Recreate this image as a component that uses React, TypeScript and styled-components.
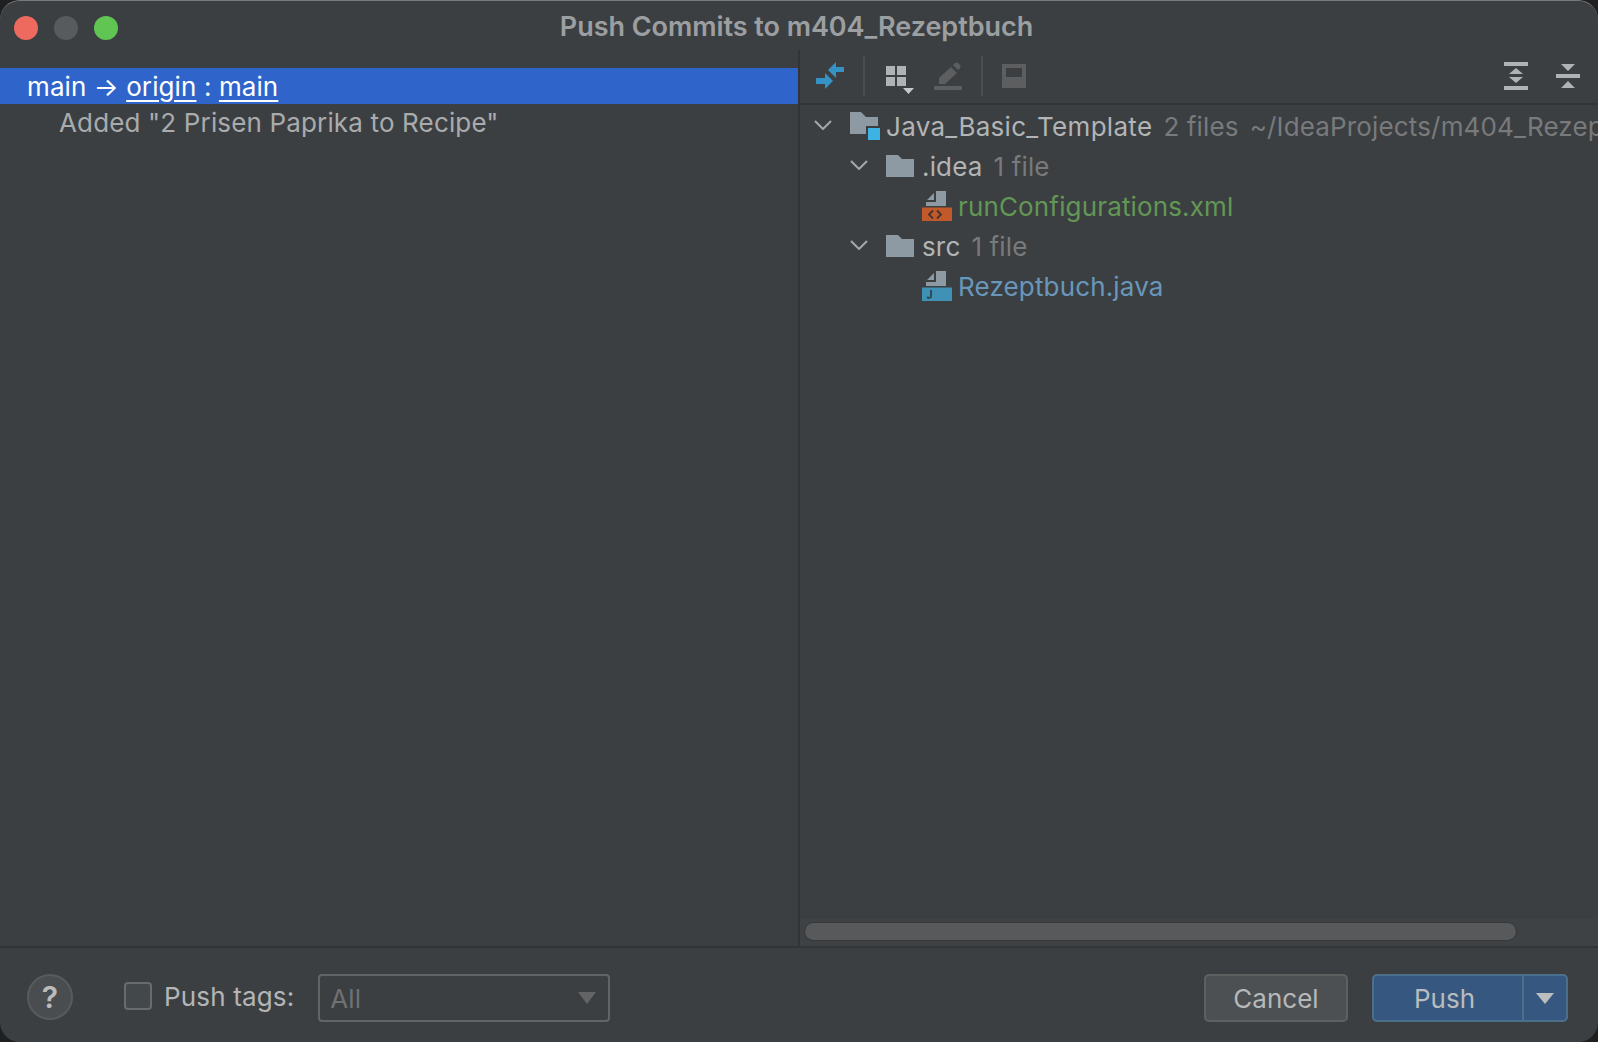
import React from 'react';
import styled, { createGlobalStyle } from 'styled-components';

const GLOBAL = createGlobalStyle`
  html, body {
    margin: 0;
    padding: 0;
    background: #1f2021;
  }
  body {
    font-family: Inter, "Noto Sans", "Liberation Sans", sans-serif;
    letter-spacing: 0.15px;
  }
  * {
    box-sizing: border-box;
  }
`;

const WINDOW = styled.div`
  width: 1598px;
  height: 1042px;
  display: flex;
  flex-direction: column;
  overflow: hidden;
  background: #3c3f41;
  border-radius: 20px;
  border-top: 1px solid #77797b;
`;

const TITLE_BAR = styled.div`
  height: 49px;
  flex: none;
  display: grid;
  grid-template-columns: 1fr auto 1fr;
  align-items: center;
  padding: 4px 19px 0 14px;
`;

const LIGHTS = styled.div`
  display: flex;
  gap: 16px;
`;

const LIGHT = styled.span<{ $color: string }>`
  width: 24px;
  height: 24px;
  border-radius: 50%;
  background: ${(p) => p.$color};
`;

const TITLE = styled.div`
  margin-top: -2px;
  font-size: 27px;
  font-weight: 600;
  letter-spacing: -0.05px;
  color: #9c9fa1;
`;

const BODY = styled.div`
  flex: 1;
  min-height: 0;
  display: flex;
`;

const LEFT_PANE = styled.div`
  width: 800px;
  flex: none;
  padding-top: 18px;
  border-right: 2px solid #323436;
`;

const PUSH_ROW = styled.div`
  height: 36px;
  padding-left: 27px;
  display: flex;
  align-items: center;
  background: #2f65ca;
  color: #fff;
  font-size: 26px;
  letter-spacing: 0.1px;
  white-space: pre;
`;

const LINK = styled.span`
  text-decoration: underline;
  text-decoration-thickness: 2px;
  text-underline-offset: 4px;
`;

const COMMIT_ROW = styled.div`
  height: 36px;
  padding-left: 59px;
  display: flex;
  align-items: center;
  color: #a9abad;
  font-size: 26px;
  white-space: pre;
`;

const RIGHT_PANE = styled.div`
  flex: 1;
  min-width: 0;
  display: flex;
  flex-direction: column;
`;

const TOOLBAR = styled.div`
  height: 55px;
  flex: none;
  display: flex;
  align-items: center;
  padding: 0 18px 2px 16px;
  border-bottom: 2px solid #323436;
`;

const TOOL_SEPARATOR = styled.span`
  width: 2px;
  height: 40px;
  margin: 0 19px;
  background: #4c4f51;
`;

const TOOL_ICON = styled.svg<{ $left?: number }>`
  display: block;
  flex: none;
  margin-left: ${(p) => p.$left ?? 0}px;
`;

const TOOL_SPACER = styled.div`
  flex: 1;
`;

const TREE = styled.div`
  flex: 1;
  min-height: 0;
  padding-top: 1px;
  overflow: hidden;
`;

const TREE_ROW = styled.div<{ $indent: number }>`
  height: 40px;
  display: flex;
  align-items: center;
  padding-left: ${(p) => p.$indent}px;
  font-size: 26px;
  white-space: nowrap;
`;

const CHEVRON = styled.svg`
  display: block;
  flex: none;
  width: 18px;
  height: 10px;
  margin: -2px 18px 0 0;
`;

const NODE_ICON = styled.svg<{ $gap?: number }>`
  display: block;
  flex: none;
  margin-right: ${(p) => p.$gap ?? 6}px;
`;

const NODE_NAME = styled.span<{ $color?: string; $spacing?: number }>`
  color: ${(p) => p.$color ?? '#b2b4b6'};
  letter-spacing: ${(p) => p.$spacing ?? 0.15}px;
`;

const NODE_HINT = styled.span`
  margin-left: 11px;
  color: #787a7c;
  white-space: pre;
`;

const SCROLL_TRACK = styled.div`
  height: 27px;
  flex: none;
  padding: 4px 0 6px 5px;
  background: #3f4244;
`;

const SCROLL_THUMB = styled.div`
  width: 711px;
  height: 17px;
  border-radius: 9px;
  background: #58595b;
  box-shadow: 0 0 0 1px #36383a;
`;

const FOOTER = styled.div`
  height: 96px;
  flex: none;
  display: flex;
  align-items: flex-start;
  padding: 26px 30px 0 27px;
  border-top: 2px solid #323436;
`;

const HELP = styled.button`
  width: 46px;
  height: 46px;
  padding: 0;
  border-radius: 50%;
  border: 2px solid #585b5d;
  background: #4a4d4f;
  color: #bbbbbb;
  font-family: inherit;
  font-size: 30px;
  font-weight: 600;
`;

const TAGS = styled.div`
  height: 48px;
  margin-left: 51px;
  display: flex;
  align-items: center;
`;

const CHECKBOX = styled.span`
  width: 28px;
  height: 28px;
  margin-top: -4px;
  border-radius: 4px;
  border: 2px solid #696b6d;
  background: #43484a;
`;

const TAGS_LABEL = styled.label`
  margin: -4px 0 0 12px;
  color: #b3b5b7;
  font-size: 26px;
`;

const COMBO = styled.div`
  width: 292px;
  height: 48px;
  margin-left: 24px;
  padding: 0 12px 0 10px;
  display: flex;
  align-items: center;
  justify-content: space-between;
  border: 2px solid #626466;
  border-radius: 4px;
  color: #6f7173;
  font-size: 26px;
`;

const ACTIONS = styled.div`
  margin-left: auto;
  display: flex;
  gap: 24px;
`;

const CANCEL = styled.button`
  width: 144px;
  height: 48px;
  padding: 0;
  border: 2px solid #5e6060;
  border-radius: 5px;
  background: #4c5052;
  color: #b6b8ba;
  font-family: inherit;
  font-size: 26px;
`;

const PUSH_SPLIT = styled.div`
  width: 196px;
  height: 48px;
  display: flex;
  border: 2px solid #4c708c;
  border-radius: 5px;
  background: #365880;
`;

const PUSH_MAIN = styled.button`
  flex: 1;
  padding: 0 7px 0 0;
  border: 0;
  background: none;
  color: #b9bcbe;
  font-family: inherit;
  font-size: 26px;
`;

const PUSH_MENU = styled.div`
  width: 44px;
  display: flex;
  align-items: center;
  justify-content: center;
  border-left: 2px solid #4c708c;
`;

function Chevron() {
  return (
    <CHEVRON viewBox="0 0 18 10">
      <path d="M1 1l8 8 8-8" fill="none" stroke="#a5a7a9" strokeWidth="2" />
    </CHEVRON>
  );
}

function Triangle({ width, height, color }: { width: number; height: number; color: string }) {
  return (
    <svg width={width} height={height} viewBox={`0 0 ${width} ${height}`} style={{ display: 'block' }}>
      <path d={`M0 0H${width}L${width / 2} ${height}z`} fill={color} />
    </svg>
  );
}

function FolderIcon() {
  return (
    <NODE_ICON width="28" height="22" viewBox="0 0 28 22" $gap={8}>
      <path d="M0 0h12l4 4h12v18H0z" fill="#8e9aa3" />
    </NODE_ICON>
  );
}

function FileIcon({ type }: { type: 'xml' | 'java' }) {
  const band = type === 'xml' ? '#c2592a' : '#3f92b5';
  return (
    <NODE_ICON width="30" height="30" viewBox="0 0 30 30">
      <path d="M5 9l7-7v7zM14 0h10v15H4v-4h10z" fill="#8e9aa3" />
      <rect x="0" y="16.500" width="30" height="13.500" fill={band} />
      {type === 'xml' ? (
        <path d="M11 19.500l-4 4 4 4M15 19.500l4 4-4 4" fill="none" stroke="#43332c" strokeWidth="1.800" />
      ) : (
        <path d="M9 19v6.500c0 1.600-2.400 1.800-4 .6" fill="none" stroke="#2d4b58" strokeWidth="2" />
      )}
    </NODE_ICON>
  );
}

export default function App(): JSX.Element {
  return (
    <>
      <GLOBAL />
      <WINDOW>
        <TITLE_BAR>
          <LIGHTS>
            <LIGHT $color="#ee6a5f" />
            <LIGHT $color="#585b5d" />
            <LIGHT $color="#61c554" />
          </LIGHTS>
          <TITLE>Push Commits to m404_Rezeptbuch</TITLE>
        </TITLE_BAR>
        <BODY>
          <LEFT_PANE>
            <PUSH_ROW>
              main → <LINK>origin</LINK> : <LINK>main</LINK>
            </PUSH_ROW>
            <COMMIT_ROW>Added "2 Prisen Paprika to Recipe"</COMMIT_ROW>
          </LEFT_PANE>
          <RIGHT_PANE>
            <TOOLBAR>
              <TOOL_ICON width="28" height="28" viewBox="0 0 28 28">
                <path d="M28 5h-8V0l-8 8 8 8v-6h8zM0 16h9v-5l8 8-8 8v-5H0z" fill="#3592c4" />
              </TOOL_ICON>
              <TOOL_SEPARATOR />
              <TOOL_ICON width="30" height="36" viewBox="0 0 30 36" $left={2}>
                <path d="M0 8h9v9H0zM11 8h9v9h-9zM0 19h9v9H0zM11 19h9v9h-9z" fill="#b0b2b4" />
                <path d="M17 30h11l-5.500 6z" fill="#c5c7c9" />
              </TOOL_ICON>
              <TOOL_ICON width="28" height="28" viewBox="0 0 28 28" $left={18}>
                <path
                  d="M5 22v-6L17 5l6 6-12 11zM19 3l2-2c1-.8 2-.8 3 0l2 2c.8 1 .8 2 0 3l-2 2zM0 24h28v4H0z"
                  fill="#5c5e60"
                />
              </TOOL_ICON>
              <TOOL_SEPARATOR />
              <TOOL_ICON width="24" height="24" viewBox="0 0 24 24">
                <path fillRule="evenodd" d="M0 0h24v24H0zM4 4v9h16V4z" fill="#5c5e60" />
              </TOOL_ICON>
              <TOOL_SPACER />
              <TOOL_ICON width="24" height="28" viewBox="0 0 24 28">
                <path d="M0 0h24v4H0zM0 24h24v4H0zM12 6l7 6H5zM5 15h14l-7 6z" fill="#b0b2b4" />
              </TOOL_ICON>
              <TOOL_ICON width="24" height="24" viewBox="0 0 24 24" $left={28}>
                <path d="M5 0h14l-7 7zM0 10h24v4H0zM12 17l7 7H5z" fill="#b0b2b4" />
              </TOOL_ICON>
            </TOOLBAR>
            <TREE>
              <TREE_ROW $indent={14}>
                <Chevron />
                <NODE_ICON width="30" height="28" viewBox="0 0 30 28">
                  <path d="M0 0h11l5 5h12v17H0z" fill="#8e9aa3" />
                  <rect x="16" y="14" width="14" height="14" fill="#3c3f41" />
                  <rect x="18" y="16" width="12" height="12" fill="#3db3e4" />
                </NODE_ICON>
                <NODE_NAME $spacing={0.3}>Java_Basic_Template</NODE_NAME>
                <NODE_HINT>2 files</NODE_HINT>
                <NODE_HINT>~/IdeaProjects/m404_Rezeptbuch</NODE_HINT>
              </TREE_ROW>
              <TREE_ROW $indent={50}>
                <Chevron />
                <FolderIcon />
                <NODE_NAME>.idea</NODE_NAME>
                <NODE_HINT>1 file</NODE_HINT>
              </TREE_ROW>
              <TREE_ROW $indent={122}>
                <FileIcon type="xml" />
                <NODE_NAME $color="#629755">runConfigurations.xml</NODE_NAME>
              </TREE_ROW>
              <TREE_ROW $indent={50}>
                <Chevron />
                <FolderIcon />
                <NODE_NAME>src</NODE_NAME>
                <NODE_HINT>1 file</NODE_HINT>
              </TREE_ROW>
              <TREE_ROW $indent={122}>
                <FileIcon type="java" />
                <NODE_NAME $color="#6897bb">Rezeptbuch.java</NODE_NAME>
              </TREE_ROW>
            </TREE>
            <SCROLL_TRACK>
              <SCROLL_THUMB />
            </SCROLL_TRACK>
          </RIGHT_PANE>
        </BODY>
        <FOOTER>
          <HELP>?</HELP>
          <TAGS>
            <CHECKBOX />
            <TAGS_LABEL>Push tags:</TAGS_LABEL>
            <COMBO>
              All
              <Triangle width={18} height={12} color="#626466" />
            </COMBO>
          </TAGS>
          <ACTIONS>
            <CANCEL>Cancel</CANCEL>
            <PUSH_SPLIT>
              <PUSH_MAIN>Push</PUSH_MAIN>
              <PUSH_MENU>
                <Triangle width={18} height={11} color="#bcbec0" />
              </PUSH_MENU>
            </PUSH_SPLIT>
          </ACTIONS>
        </FOOTER>
      </WINDOW>
    </>
  );
}
